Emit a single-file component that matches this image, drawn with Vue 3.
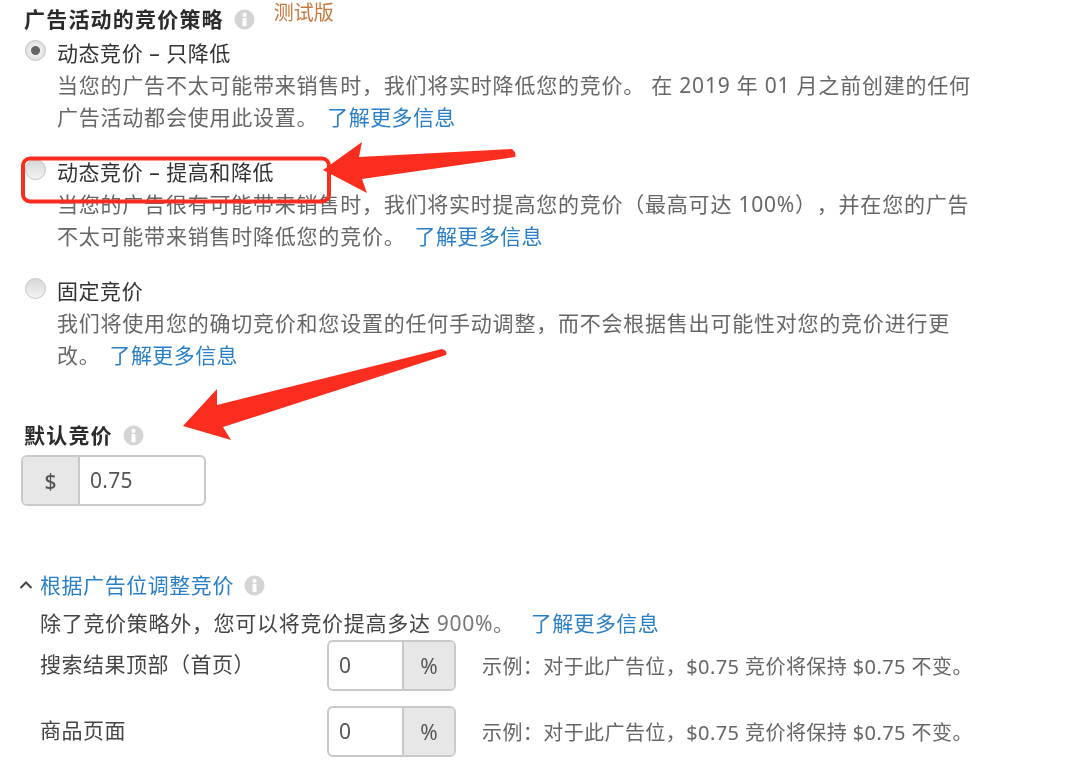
<script setup>
const options = [
  {
    label: '动态竞价 – 只降低',
    desc: ['当您的广告不太可能带来销售时，我们将实时降低您的竞价。 在 2019 年 01 月之前创建的任何', '广告活动都会使用此设置。'],
    checked: true,
  },
  {
    label: '动态竞价 – 提高和降低',
    desc: ['当您的广告很有可能带来销售时，我们将实时提高您的竞价（最高可达 100%），并在您的广告', '不太可能带来销售时降低您的竞价。'],
    checked: false,
  },
  {
    label: '固定竞价',
    desc: ['我们将使用您的确切竞价和您设置的任何手动调整，而不会根据售出可能性对您的竞价进行更', '改。'],
    checked: false,
  },
]
const placements = ['搜索结果顶部（首页）', '商品页面']
</script>

<template>
  <div class="page">
    <div class="title-row">
      <span class="title">广告活动的竞价策略</span>
      <svg class="info" viewBox="0 0 22 22"><circle cx="11" cy="11" r="10.5" fill="#d4d4d4" /><circle cx="11" cy="6.2" r="2.2" fill="#fff" /><rect x="8.9" y="9.5" width="4.2" height="8.5" fill="#fff" /></svg>
      <span class="beta">测试版</span>
    </div>

    <div class="options">
      <div v-for="o in options" :key="o.label" class="option">
        <span class="radio" :class="{ checked: o.checked }"></span>
        <div class="option-body">
          <div class="label">{{ o.label }}</div>
          <div class="desc">{{ o.desc[0] }}</div>
          <div class="desc">{{ o.desc[1] }}<a class="link">了解更多信息</a></div>
        </div>
      </div>
    </div>

    <div class="title-row bid-title">
      <span class="title">默认竞价</span>
      <svg class="info" viewBox="0 0 22 22"><circle cx="11" cy="11" r="10.5" fill="#d4d4d4" /><circle cx="11" cy="6.2" r="2.2" fill="#fff" /><rect x="8.9" y="9.5" width="4.2" height="8.5" fill="#fff" /></svg>
    </div>
    <div class="field bid-field">
      <span class="addon dollar">$</span>
      <span class="value">0.75</span>
    </div>

    <div class="toggle">
      <svg class="chevron" viewBox="0 0 14 10"><path d="M1.5 8 L7 2.5 L12.5 8" fill="none" stroke="#444" stroke-width="2" /></svg>
      <span class="toggle-text">根据广告位调整竞价</span>
      <svg class="info" viewBox="0 0 22 22"><circle cx="11" cy="11" r="10.5" fill="#d4d4d4" /><circle cx="11" cy="6.2" r="2.2" fill="#fff" /><rect x="8.9" y="9.5" width="4.2" height="8.5" fill="#fff" /></svg>
    </div>
    <div class="adjust">
      <div class="adjust-line">除了竞价策略外，您可以将竞价提高多达 <span class="muted">900%。</span><a class="link">了解更多信息</a></div>
      <div v-for="p in placements" :key="p" class="place-row">
        <span class="place-label">{{ p }}</span>
        <div class="field pct-field">
          <span class="value">0</span>
          <span class="addon pct">%</span>
        </div>
        <span class="example">示例：对于此广告位，$0.75 竞价将保持 $0.75 不变。</span>
      </div>
    </div>

    <svg class="overlay" viewBox="0 0 1080 766">
      <rect x="23" y="158.5" width="306" height="43" rx="7" fill="none" stroke="#fb2d1e" stroke-width="4" />
      <path d="M323 170 L362 142 L359 157 L512 149 Q517 153 515 157 L362 179 L367 193 Z" fill="#fb2d1e" />
      <path d="M183 426 L217 389 L217 405 L442 349 Q448 351 446 355 L223 427 L231 440 Z" fill="#fb2d1e" />
    </svg>
  </div>
</template>

<style scoped>
.page {
  position: relative;
  width: 1080px;
  height: 766px;
  overflow: hidden;
  box-sizing: border-box;
  padding: 3px 0 0 24px;
  background: #fff;
  font-family: "Noto Sans", "Noto Sans CJK SC", sans-serif;
  font-size: 21px;
  line-height: 32px;
  color: #555;
  text-spacing-trim: space-all;
  filter: blur(0.55px);
}
.title-row {
  display: flex;
  align-items: center;
  height: 32px;
}
.title {
  font-size: 21px;
  font-weight: 700;
  letter-spacing: 1.2px;
  color: #2b2b2b;
}
.info {
  width: 21px;
  height: 21px;
  margin-left: 10px;
  flex: none;
}
.beta {
  align-self: flex-start;
  margin: -6px 0 0 19px;
  font-size: 20px;
  color: #c9793f;
}
.options {
  display: flex;
  flex-direction: column;
  gap: 23px;
  margin-top: 2px;
}
.option {
  display: flex;
}
.radio {
  width: 21px;
  height: 21px;
  margin: 3px 11px 0 1px;
  flex: none;
  border-radius: 50%;
  box-sizing: border-box;
  border: 1px solid #c4c4c4;
  background: linear-gradient(#d6d6d6, #f4f4f4);
}
.radio.checked {
  background: radial-gradient(circle, #666 0 4px, #eee 5px, #d4d4d4 100%);
}
.label {
  color: #333;
  letter-spacing: 0.55px;
}
.desc {
  color: #666;
  letter-spacing: 0.78px;
}
.link {
  margin-left: 9px;
  color: #2a7fc9;
  letter-spacing: 0.4px;
}
.bid-title {
  margin-top: 48px;
}
.field {
  display: flex;
  box-sizing: border-box;
  height: 51px;
  border: 2px solid #c9c9c9;
  border-radius: 6px;
  overflow: hidden;
  background: #fff;
}
.bid-field {
  width: 185px;
  margin: 4px 0 0 -3px;
}
.addon {
  display: flex;
  align-items: center;
  justify-content: center;
  background: #e7e7e7;
  color: #555;
  flex: none;
}
.dollar {
  width: 55px;
  border-right: 2px solid #c9c9c9;
  font-weight: 500;
}
.value {
  flex: 1;
  padding-left: 10px;
  line-height: 47px;
  letter-spacing: 0.3px;
  color: #555;
}
.toggle {
  display: flex;
  align-items: center;
  margin: 63px 0 0 -5px;
  height: 32px;
}
.chevron {
  width: 14px;
  height: 10px;
  margin-right: 7px;
}
.toggle-text {
  color: #2a7fc9;
  letter-spacing: 0.55px;
}
.adjust {
  margin: 6px 0 0 16px;
}
.adjust-line {
  color: #444;
  letter-spacing: 0.7px;
  height: 32px;
}
.muted {
  color: #777;
}
.adjust-line .link {
  margin-left: 16px;
}
.place-row {
  display: flex;
  align-items: center;
  margin-bottom: 15px;
  margin-top: 1px;
}
.place-label {
  width: 287px;
  margin-bottom: 4px;
  color: #444;
  flex: none;
  letter-spacing: 0.5px;
}
.pct-field {
  width: 129px;
  flex: none;
}
.pct {
  width: 50px;
  border-left: 2px solid #c9c9c9;
}
.example {
  margin: 2px 0 0 26px;
  color: #666;
  font-size: 20px;
  letter-spacing: 0.42px;
  white-space: nowrap;
}
.overlay {
  position: absolute;
  inset: 0;
  width: 1080px;
  height: 766px;
  pointer-events: none;
}
</style>
